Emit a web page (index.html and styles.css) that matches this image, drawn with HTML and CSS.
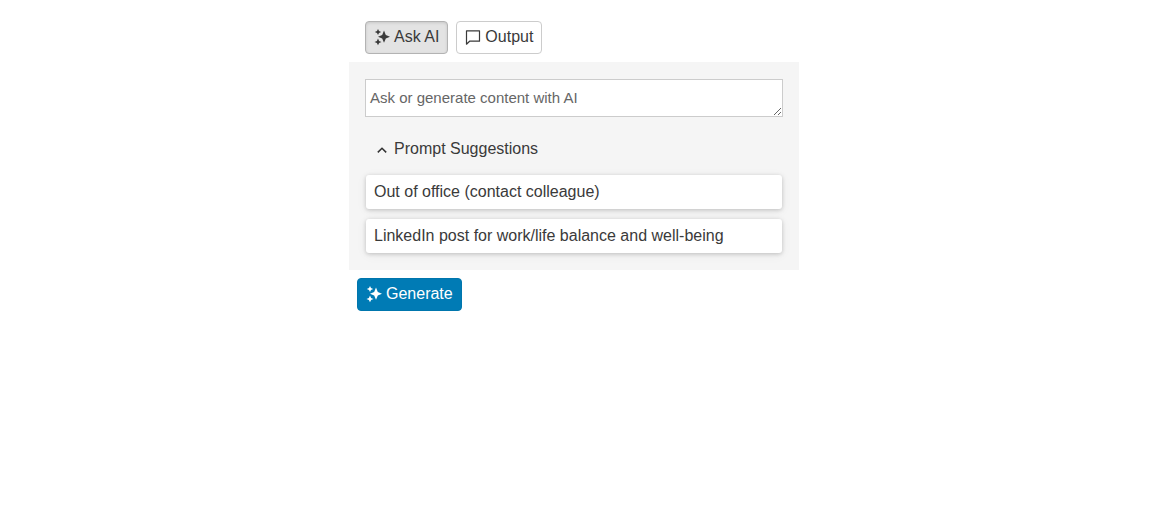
FILE: index.html
```html
<!DOCTYPE html>
<html lang="en">
<head>
<meta charset="utf-8">
<title>Ask AI</title>
<link rel="stylesheet" href="styles.css">
</head>
<body>
<main class="widget">
  <div class="tabs">
    <button class="btn tab active" type="button">
      <svg class="icon" viewBox="0 0 16 16" aria-hidden="true"><path class="fill" d="M10 1.6 11.8 5.9l4.2 1.8-4.2 1.8L10 13.8 8.2 9.5 4 7.7l4.2-1.8zM4 0l1 2.1L7.2 3 5 3.9 4 6 3 3.9.8 3 3 2.1zM4 9.5l1.1 2.4 2.4 1-2.4 1L4 16.3l-1.1-2.4-2.4-1 2.4-1z"/></svg>
      Ask AI
    </button>
    <button class="btn tab" type="button">
      <svg class="icon" viewBox="0 0 16 16" aria-hidden="true"><path class="line" d="M1.5 1.8h13v10.4H4.6L1.5 15.2z"/></svg>
      Output
    </button>
  </div>
  <section class="panel">
    <textarea class="prompt" placeholder="Ask or generate content with AI"></textarea>
    <div class="suggest-head">
      <svg class="chevron" viewBox="0 0 10 6" aria-hidden="true"><path d="M.8 5.4 5 1.2l4.2 4.2"/></svg>
      Prompt Suggestions
    </div>
    <div class="suggest-list">
      <div class="suggest">Out of office (contact colleague)</div>
      <div class="suggest">LinkedIn post for work/life balance and well-being</div>
    </div>
  </section>
  <button class="btn generate" type="button">
    <svg class="icon" viewBox="0 0 16 16" aria-hidden="true"><path class="fill" d="M10 1.6 11.8 5.9l4.2 1.8-4.2 1.8L10 13.8 8.2 9.5 4 7.7l4.2-1.8zM4 0l1 2.1L7.2 3 5 3.9 4 6 3 3.9.8 3 3 2.1zM4 9.5l1.1 2.4 2.4 1-2.4 1L4 16.3l-1.1-2.4-2.4-1 2.4-1z"/></svg>
    Generate
  </button>
</main>
</body>
</html>
```
FILE: styles.css
```css
* { box-sizing: border-box; }
html, body { margin: 0; background: #fff; }
body {
  padding: 21px 0 0 349px;
  font-family: "Liberation Sans", Arial, sans-serif;
  color: #333;
}
.widget { width: 450px; }
.tabs {
  display: flex;
  gap: 8px;
  padding-left: 16px;
  margin-bottom: 8px;
}
.btn {
  display: inline-flex;
  align-items: center;
  gap: 4px;
  height: 33px;
  padding: 0 8px 2px;
  border: 1px solid #ccc;
  border-radius: 4px;
  background: #fff;
  color: #3a3a3a;
  font: 16px/1 "Liberation Sans", Arial, sans-serif;
}
.tab.active {
  background: #e3e3e3;
  border-color: #b3b3b3;
  box-shadow: inset 0 1px 3px rgba(0, 0, 0, .125);
}
.icon { width: 16px; height: 16px; flex: none; overflow: visible; }
.icon .fill { fill: currentColor; }
.icon .line {
  fill: none;
  stroke: currentColor;
  stroke-width: 1.2;
  stroke-linejoin: round;
}
.panel {
  height: 208px;
  padding: 17px 16px 0;
  background: #f5f5f5;
}
.prompt {
  display: block;
  width: 100%;
  height: 38px;
  padding: 9px 4px;
  border: 1px solid #ccc;
  border-radius: 0;
  background: #fff;
  color: #333;
  font: 15px/17px "Liberation Sans", Arial, sans-serif;
  outline: 0;
}
.prompt::placeholder { color: #666; opacity: 1; }
.suggest-head {
  display: flex;
  align-items: center;
  gap: 7px;
  height: 20px;
  margin: 22px 0 16px 12px;
  color: #3a3a3a;
  font-size: 16px;
  line-height: 20px;
}
.chevron {
  width: 10px;
  height: 6px;
  margin-top: 2px;
  fill: none;
  stroke: #333;
  stroke-width: 1.5;
}
.suggest-list {
  display: flex;
  flex-direction: column;
  gap: 10px;
}
.suggest {
  height: 34px;
  padding: 0 8px;
  margin: 0 1px;
  background: #fff;
  border-radius: 3px;
  box-shadow: 0 1px 4px rgba(0, 0, 0, .2), 0 2px 12px rgba(0, 0, 0, .05);
  color: #3a3a3a;
  font-size: 16px;
  line-height: 33px;
}
.generate {
  margin: 8px 0 0 8px;
  background: #007bb5;
  border-color: #0076ad;
  color: #fff;
}
```
